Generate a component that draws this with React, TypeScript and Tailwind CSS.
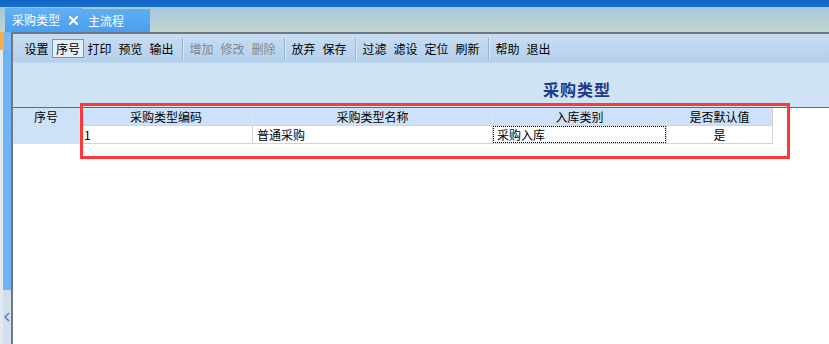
import React from "react";

const F = { fontFamily: '"Noto Sans CJK SC", "Liberation Sans", sans-serif' };

type Btn = { t: string; d?: boolean; p?: boolean } | "sep";

const items: Btn[] = [
  { t: "设置" },
  { t: "序号", p: true },
  { t: "打印" },
  { t: "预览" },
  { t: "输出" },
  "sep",
  { t: "增加", d: true },
  { t: "修改", d: true },
  { t: "删除", d: true },
  "sep",
  { t: "放弃" },
  { t: "保存" },
  "sep",
  { t: "过滤" },
  { t: "滤设" },
  { t: "定位" },
  { t: "刷新" },
  "sep",
  { t: "帮助" },
  { t: "退出" },
];

export default function App() {
  return (
    <div className="relative w-[829px] h-[344px] overflow-hidden bg-white text-[12px] text-black" style={F}>
      {/* top bar */}
      <div className="h-[7px] bg-gradient-to-b from-[#0f64c4] to-[#1a70cc]" />
      {/* tab strip */}
      <div className="h-[25px] bg-gradient-to-b from-[#a8c5dc] to-[#c2d6cf] flex items-end pl-[5px]">
        <div className="h-[25px] w-[77px] bg-gradient-to-b from-[#63b0f4] to-[#4a9fee] border-t border-[#8ec6f6] text-white flex items-center pl-[7px] leading-none">
          <span className="text-[12px]">采购类型</span>
          <svg width="9" height="9" viewBox="0 0 9 9" className="ml-[9px]">
            <path d="M1 1L8 8M8 1L1 8" stroke="white" strokeWidth="2" strokeLinecap="square" />
          </svg>
        </div>
        <div className="h-[23px] w-[68px] bg-gradient-to-b from-[#5fadf3] to-[#4c9fee] text-white flex items-center pl-[6px] leading-none">
          <span className="text-[12px]">主流程</span>
        </div>
      </div>
      {/* body */}
      <div className="flex h-[312px]">
        {/* left strip */}
        <div className="w-[11px] flex flex-col">
          <div className="h-[18px] flex">
            <div className="w-[4px] bg-[#f5ae48]" />
            <div className="flex-1 bg-[#78b9f3]" />
          </div>
          <div className="h-[240px] flex">
            <div className="w-[3px] bg-[#dfe9f2]" />
            <div className="flex-1 bg-[#6db3f6]" />
          </div>
          <div className="flex-1 flex">
            <div className="w-[3px] bg-[#dfe9f2]" />
            <div className="flex-1 bg-[#d3e0ec] flex items-start pt-[22px] justify-center">
              <svg width="6" height="10" viewBox="0 0 6 10">
                <path d="M5 1L1 5L5 9" stroke="#4f78c0" strokeWidth="1.4" fill="none" />
              </svg>
            </div>
          </div>
        </div>
        {/* panel */}
        <div className="flex-1 border-l-2 border-t-2 border-[#6f7880] flex flex-col">
          {/* toolbar */}
          <div className="h-[28px] bg-gradient-to-b from-[#c8ddf2] to-[#b4d0ec] flex items-center pl-[8px] pt-[1px]">
            {items.map((it, i) =>
              it === "sep" ? (
                <div key={i} className="w-[9px] h-[22px] flex pl-[5px]">
                  <div className="w-px h-full bg-[#98b2d0]" />
                  <div className="w-px h-full bg-[#dceaf7]" />
                </div>
              ) : (
                <div
                  key={i}
                  className={
                    it.p
                      ? "w-[32px] h-[19px] flex items-center justify-center border border-[#7f93aa] bg-[#e4eef8] leading-none"
                      : "w-[31px] h-[19px] flex items-center justify-center leading-none"
                  }
                >
                  <span className={it.d ? "text-[#7e8892]" : "text-black"}>{it.t}</span>
                </div>
              )
            )}
          </div>
          {/* title */}
          <div className="h-[45px] bg-[#d0e3f4] border-t border-[#c2d8ee] flex items-end pb-[10px] pl-[530px]">
            <span className="text-[16px] font-bold text-[#1c3c8e] leading-none tracking-[1px]">采购类型</span>
          </div>
          <div className="h-px bg-[#6a6a6a]" />
          {/* header */}
          <div className="flex h-[17px] leading-none">
            <div className="w-[67px] bg-[#cde2f8] border-r border-[#dde6ef] flex items-center justify-center">序号</div>
            <div className="w-[173px] bg-[#cde2f8] border-r border-[#dde6ef] flex items-center justify-center">采购类型编码</div>
            <div className="w-[240px] bg-[#cde2f8] border-r border-[#dde6ef] flex items-center justify-center">采购类型名称</div>
            <div className="w-[174px] bg-[#cde2f8] border-r border-[#dde6ef] flex items-center justify-center">入库类别</div>
            <div className="w-[106px] bg-[#cde2f8] border-r border-[#d4d4d4] flex items-center justify-center">是否默认值</div>
          </div>
          {/* data row */}
          <div className="flex h-[19px] leading-none">
            <div className="w-[67px] bg-[#cde2f8] border-t border-b border-[#d6dbe0]" />
            <div className="w-[173px] border-t border-b border-r border-[#d4d4d4] flex items-center pl-[4px]">1</div>
            <div className="w-[240px] border-t border-b border-r border-[#d4d4d4] flex items-center pl-[4px]">普通采购</div>
            <div className="w-[174px] border-t border-b border-r border-[#d4d4d4] flex">
              <div className="flex-1 border border-dotted border-black flex items-center pl-[3px]">采购入库</div>
            </div>
            <div className="w-[106px] border-t border-b border-r border-[#d4d4d4] flex items-center justify-center">是</div>
          </div>
        </div>
      </div>
      {/* red highlight */}
      <div className="absolute left-[80px] top-[103px] w-[710px] h-[56px] border-[3px] border-[#ff3838]" />
    </div>
  );
}
